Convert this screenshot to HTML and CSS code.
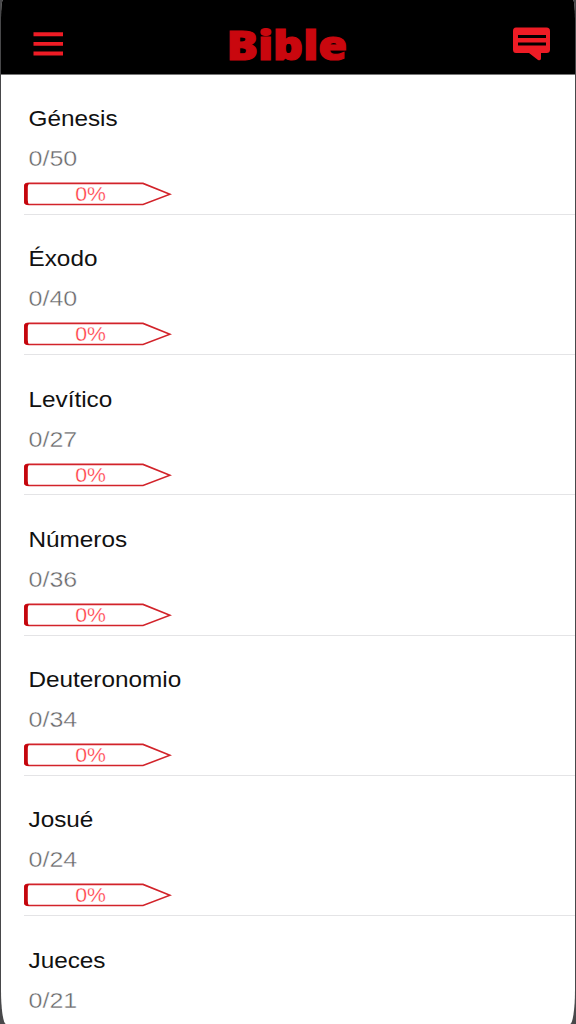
FILE: index.html
```
<!DOCTYPE html>
<html lang="es">
<head>
<meta charset="utf-8">
<title>Bible</title>
<link rel="stylesheet" href="styles.css">
</head>
<body>
<svg class="symbols" aria-hidden="true">
  <symbol id="arrow" viewBox="0 0 148 24">
    <path d="M5 1.400H119L146 12.200 119 22.500H5Q.8 22.300.8 20V4Q.8 1.400 5 1.400Z" fill="#fff" stroke="#d2232a" stroke-width="1.600"/>
    <path d="M5 1Q.2 1.400 .2 3.500V20.500Q.2 22.500 5 23Q3.800 21 3.800 18V6Q3.800 3.500 5 1Z" fill="#c4060d"/>
  </symbol>
</svg>
<div class="phone">
  <header class="bar">
    <svg class="menu" viewBox="0 0 30 24" role="img" aria-label="Menú"><path d="M.5 2.300H30M.5 11.900H30M.5 21.500H30" stroke="#ee1c25" stroke-width="3.900"/></svg>
    <h1 class="brand"><span class="brand-text">Bible</span></h1>
    <svg class="chat" viewBox="0 0 38 34" role="img" aria-label="Mensajes"><path d="M4 .5H34.500Q38 .5 38 4V22.500Q38 26 34.500 26H29V31.500Q29 34 26 33L17 26H4Q1 26 1 22.500V4Q1 .5 4 .5Z" fill="#ee1c25"/><path d="M6 9.500H34M6 17H34" stroke="#000" stroke-width="2.800"/></svg>
  </header>
  <main class="books">
    <section class="book"><h2 class="name">Génesis</h2><p class="count">0/50</p><div class="progress"><svg class="arrow"><use href="#arrow"/></svg><span class="percent">0%</span></div></section>
    <section class="book"><h2 class="name">Éxodo</h2><p class="count">0/40</p><div class="progress"><svg class="arrow"><use href="#arrow"/></svg><span class="percent">0%</span></div></section>
    <section class="book"><h2 class="name">Levítico</h2><p class="count">0/27</p><div class="progress"><svg class="arrow"><use href="#arrow"/></svg><span class="percent">0%</span></div></section>
    <section class="book"><h2 class="name">Números</h2><p class="count">0/36</p><div class="progress"><svg class="arrow"><use href="#arrow"/></svg><span class="percent">0%</span></div></section>
    <section class="book"><h2 class="name">Deuteronomio</h2><p class="count">0/34</p><div class="progress"><svg class="arrow"><use href="#arrow"/></svg><span class="percent">0%</span></div></section>
    <section class="book"><h2 class="name">Josué</h2><p class="count">0/24</p><div class="progress"><svg class="arrow"><use href="#arrow"/></svg><span class="percent">0%</span></div></section>
    <section class="book"><h2 class="name">Jueces</h2><p class="count">0/21</p></section>
  </main>
</div>
</body>
</html>
```

FILE: styles.css
```
* { box-sizing: border-box; }
body { margin: 0; background: #48484a; }
.symbols { display: none; }
.phone {
  height: 1024px;
  margin: 0 1.500px 0 1px;
  overflow: hidden;
  background: #fff;
  border-radius: 2px 2px 5px 5px / 18px 18px 34px 34px;
}
.bar {
  display: grid;
  grid-template-columns: 38px 1fr 38px;
  height: 74.500px;
  padding: 0 25px 0 32px;
  background: #000;
  border-bottom: 1px solid #777;
}
.menu { width: 30px; height: 24px; margin-top: 32px; }
.chat { width: 38px; height: 34px; margin-top: 27px; }
.brand { margin: 17px 0 0; text-align: center; line-height: 56px; font-size: 40.500px; }
.brand-text {
  display: inline-block;
  font-family: "Noto Sans", "Open Sans", sans-serif;
  font-weight: 900;
  color: #c9070e;
  -webkit-text-stroke: 1.200px #c9070e;
  transform: translateX(-4.500px) scaleX(1.155);
}
.book {
  height: 140.250px;
  margin-left: 23px;
  padding: 30.500px 0 0 5px;
  border-bottom: 1px solid #e4e4e6;
}
.name, .count {
  width: max-content;
  margin: 0;
  transform-origin: 0 50%;
}
.name {
  font: 400 22px/28px "Liberation Sans", Arial, sans-serif;
  color: #111;
  transform: translateX(-.5px) scaleX(1.105);
}
.count {
  margin-top: 12px;
  font: 400 22px/28px "Liberation Sans", Arial, sans-serif;
  color: #666668;
  -webkit-text-stroke: .4px #fff;
  transform: translateX(-.5px) scaleX(1.140);
}
.progress {
  display: grid;
  width: 148px;
  height: 24px;
  margin: 9px 0 0 -5px;
}
.arrow, .percent { grid-area: 1 / 1; }
.arrow { width: 148px; height: 24px; }
.percent {
  width: 133px;
  text-align: center;
  font: 400 19.500px/24px "Liberation Sans", Arial, sans-serif;
  color: #ff343c;
  -webkit-text-stroke: .3px #fff;
  transform: scaleX(1.090);
}
```
